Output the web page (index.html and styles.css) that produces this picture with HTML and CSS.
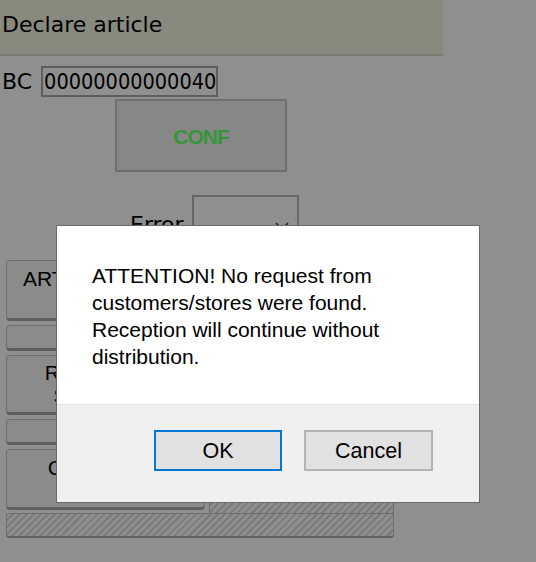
FILE: index.html
```html
<!DOCTYPE html>
<html lang="en">
<head>
<meta charset="utf-8">
<title>Declare article</title>
<link rel="stylesheet" href="styles.css">
</head>
<body>
<div class="page">
  <header class="title">Declare article</header>
  <div class="bc-row">
    <label class="bc-label" for="bc">BC</label>
    <input class="bc-input" id="bc" type="text" value="00000000000040" readonly>
  </div>
  <button class="conf" type="button">CONF</button>
  <div class="error-row">
    <span class="error-label">Error</span>
    <div class="select">
      <svg class="chev" width="14" height="8" viewBox="0 0 14 8"><polyline points="1,1 7,7 13,1" fill="none" stroke="#333" stroke-width="1.5"/></svg>
    </div>
  </div>
  <div class="grid">
    <button class="act tall" type="button">ARTICLE NOT IN ORDER</button>
    <button class="act tall" type="button"></button>
    <button class="act small" type="button"></button>
    <button class="act small" type="button"></button>
    <button class="act tall" type="button">RETURN TO SUPPLIER</button>
    <button class="act tall" type="button"></button>
    <button class="act small" type="button"></button>
    <button class="act small" type="button"></button>
    <button class="act tall" type="button">COMPLETE INBOUND</button>
    <div class="act hatched open"></div>
  </div>
  <div class="hatch-bar"></div>
</div>

<div class="overlay">
  <div class="dialog" role="dialog">
    <div class="dialog-body">ATTENTION! No request from customers/stores were found. Reception will continue without distribution.</div>
    <div class="dialog-footer">
      <button class="dlg-btn ok" type="button">OK</button>
      <button class="dlg-btn cancel" type="button">Cancel</button>
    </div>
  </div>
</div>
</body>
</html>
```
FILE: styles.css
```css
* { box-sizing: border-box; }

html, body {
  margin: 0;
  padding: 0;
  background: #eeeeee;
}

body {
  font-family: "DejaVu Sans", Verdana, sans-serif;
  font-size: 22px;
  color: #000;
  width: 536px;
  height: 562px;
  overflow: hidden;
}

.page {
  display: flex;
  flex-direction: column;
  align-items: flex-start;
}

.title {
  width: 443px;
  height: 56px;
  padding: 12px 2px 0;
  background: #e4e6d2;
  border-bottom: 2px solid #c8cabc;
  line-height: normal;
}

.bc-row {
  display: flex;
  align-items: center;
  gap: 9px;
  margin-top: 10px;
  padding-left: 2px;
}

.bc-label { line-height: normal; }

.bc-input {
  width: 177px;
  height: 31px;
  border: 2px solid #9d9d9d;
  background: transparent;
  padding: 0 0 0 1px;
  font-family: "DejaVu Sans Condensed", "DejaVu Sans", sans-serif;
  font-stretch: condensed;
  font-size: 21.5px;
  color: #000;
  outline: none;
}

.conf {
  margin: 2px 0 0 115px;
  width: 172px;
  height: 73px;
  background: #e1e1e1;
  border: 2px solid #b7b7b7;
  font-family: "Liberation Sans", Arial, sans-serif;
  font-weight: bold;
  font-size: 21px;
  letter-spacing: -1px;
  color: #5cf85c;
  padding: 3px 0 0;
}

.error-row {
  display: flex;
  align-items: center;
  gap: 8px;
  margin: 23px 0 0 130px;
}

.error-label { line-height: normal; }

.select {
  position: relative;
  width: 107px;
  height: 58px;
  border: 2px solid #aaaaaa;
}

.chev {
  position: absolute;
  right: 8px;
  top: 25px;
}

.grid {
  display: grid;
  grid-template-columns: 199px 185px;
  grid-template-rows: 61px 26px 60px 26px 61px;
  column-gap: 4px;
  row-gap: 4px;
  margin: 7px 0 0 6px;
  width: 388px;
}

.act {
  background: #e8e8e8;
  border: 1px solid #b7b7b7;
  border-bottom: 3px solid #9e9e9e;
  border-radius: 4px;
  font-family: "Liberation Sans", Arial, sans-serif;
  font-size: 21px;
  line-height: 23px;
  color: #000;
  padding: 0 14px;
  text-align: center;
}

.hatched {
  background: repeating-linear-gradient(135deg, #ededed 0 3px, #cbcbcb 3px 5px);
}

.open {
  border-bottom: none;
  border-radius: 4px 4px 0 0;
  margin-bottom: -7px;
}

.hatch-bar {
  margin: 3px 0 0 6px;
  width: 388px;
  height: 25px;
  border: 1px solid #b7b7b7;
  border-bottom: 2px solid #9e9e9e;
  border-radius: 3px;
  background: repeating-linear-gradient(135deg, #ededed 0 3px, #cbcbcb 3px 5px);
}

.overlay {
  position: fixed;
  inset: 0;
  background: rgba(0, 0, 0, 0.4);
  display: flex;
  justify-content: center;
  align-items: flex-start;
  padding-top: 225px;
}

.dialog {
  width: 424px;
  border: 1px solid #6a6a6a;
  background: #fff;
  font-family: "Liberation Sans", Arial, sans-serif;
  font-size: 21px;
  color: #000;
}

.dialog-body {
  height: 178px;
  padding: 36px 36px 0 35px;
  line-height: 27px;
}

.dialog-footer {
  height: 98px;
  background: #f0f0f0;
  border-top: 1px solid #e3e3e3;
  display: flex;
  justify-content: flex-end;
  align-items: flex-start;
  gap: 22px;
  padding: 25px 46px 0 0;
}

.dlg-btn {
  height: 41px;
  background: #e1e1e1;
  font-family: "Liberation Sans", Arial, sans-serif;
  font-size: 21.5px;
  line-height: 24px;
  color: #000;
  padding: 0;
}

.ok {
  width: 128px;
  border: 2px solid #0078d7;
}

.cancel {
  width: 129px;
  border: 2px solid #b4b4b4;
}
```
